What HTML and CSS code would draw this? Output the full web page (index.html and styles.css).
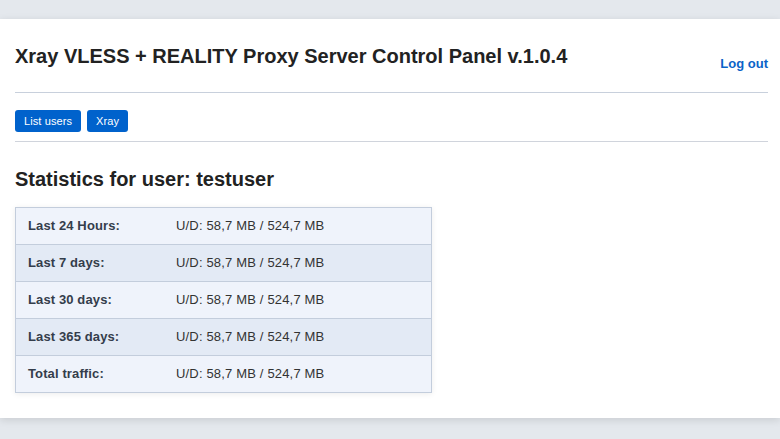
FILE: index.html
```html
<!DOCTYPE html>
<html>
<head>
<meta charset="utf-8">
<link rel="stylesheet" href="styles.css">
</head>
<body>
<div class="panel">
  <header class="header">
    <h1 class="title">Xray VLESS + REALITY Proxy Server Control Panel v.1.0.4</h1>
    <a class="logout" href="#">Log out</a>
  </header>
  <nav class="nav">
    <a class="btn" href="#">List users</a>
    <a class="btn" href="#">Xray</a>
  </nav>
  <h2 class="heading">Statistics for user: testuser</h2>
  <table class="stats">
    <tr class="odd"><td class="label">Last 24 Hours:</td><td class="value">U/D: 58,7 MB / 524,7 MB</td></tr>
    <tr class="even"><td class="label">Last 7 days:</td><td class="value">U/D: 58,7 MB / 524,7 MB</td></tr>
    <tr class="odd"><td class="label">Last 30 days:</td><td class="value">U/D: 58,7 MB / 524,7 MB</td></tr>
    <tr class="even"><td class="label">Last 365 days:</td><td class="value">U/D: 58,7 MB / 524,7 MB</td></tr>
    <tr class="odd"><td class="label">Total traffic:</td><td class="value">U/D: 58,7 MB / 524,7 MB</td></tr>
  </table>
</div>
</body>
</html>
```

FILE: styles.css
```css
html, body {
  margin: 0;
  padding: 0;
}
body {
  background: #e4e8ed;
  font-family: "Liberation Sans", Arial, sans-serif;
  color: #222;
  height: 439px;
  overflow: hidden;
}
.panel {
  margin-top: 19px;
  background: #fff;
  height: 399px;
  box-sizing: border-box;
  padding: 25px 12px 0 15px;
  box-shadow: 0 2px 8px rgba(0, 0, 0, 0.12);
}
.header {
  display: flex;
  justify-content: space-between;
  align-items: flex-start;
  padding-bottom: 20px;
  border-bottom: 1px solid #c8d0dc;
}
.title {
  margin: 0;
  font-size: 20px;
  line-height: 24px;
  font-weight: bold;
  color: #222;
}
.logout {
  margin-top: 12px;
  font-size: 13px;
  line-height: 16px;
  font-weight: bold;
  color: #0b63c8;
  text-decoration: none;
}
.nav {
  display: flex;
  gap: 6px;
  padding: 17px 0 9px;
  border-bottom: 1px solid #d0d4dc;
}
.btn {
  display: inline-block;
  height: 22px;
  line-height: 22px;
  padding: 0 9px;
  background: #0062cc;
  color: #fff;
  font-size: 11px;
  letter-spacing: 0.1px;
  border-radius: 3px;
  text-decoration: none;
}
.heading {
  margin: 26px 0 16px;
  font-size: 20px;
  line-height: 23px;
  font-weight: bold;
  color: #222;
}
.stats {
  border-collapse: collapse;
  width: 417px;
  border: 1px solid #c3cddc;
  box-shadow: 0 1px 6px rgba(0, 0, 0, 0.08);
  font-size: 13px;
}
.stats td {
  height: 35px;
  padding: 0 12px 1px;
  border-top: 1px solid #c3cddc;
}
.stats .odd {
  background: #eff3fb;
}
.stats .even {
  background: #e3eaf5;
}
.stats .label {
  width: 124px;
  font-weight: bold;
  color: #343d4b;
  letter-spacing: 0.12px;
}
.stats .value {
  color: #333;
  letter-spacing: 0.17px;
}
```
